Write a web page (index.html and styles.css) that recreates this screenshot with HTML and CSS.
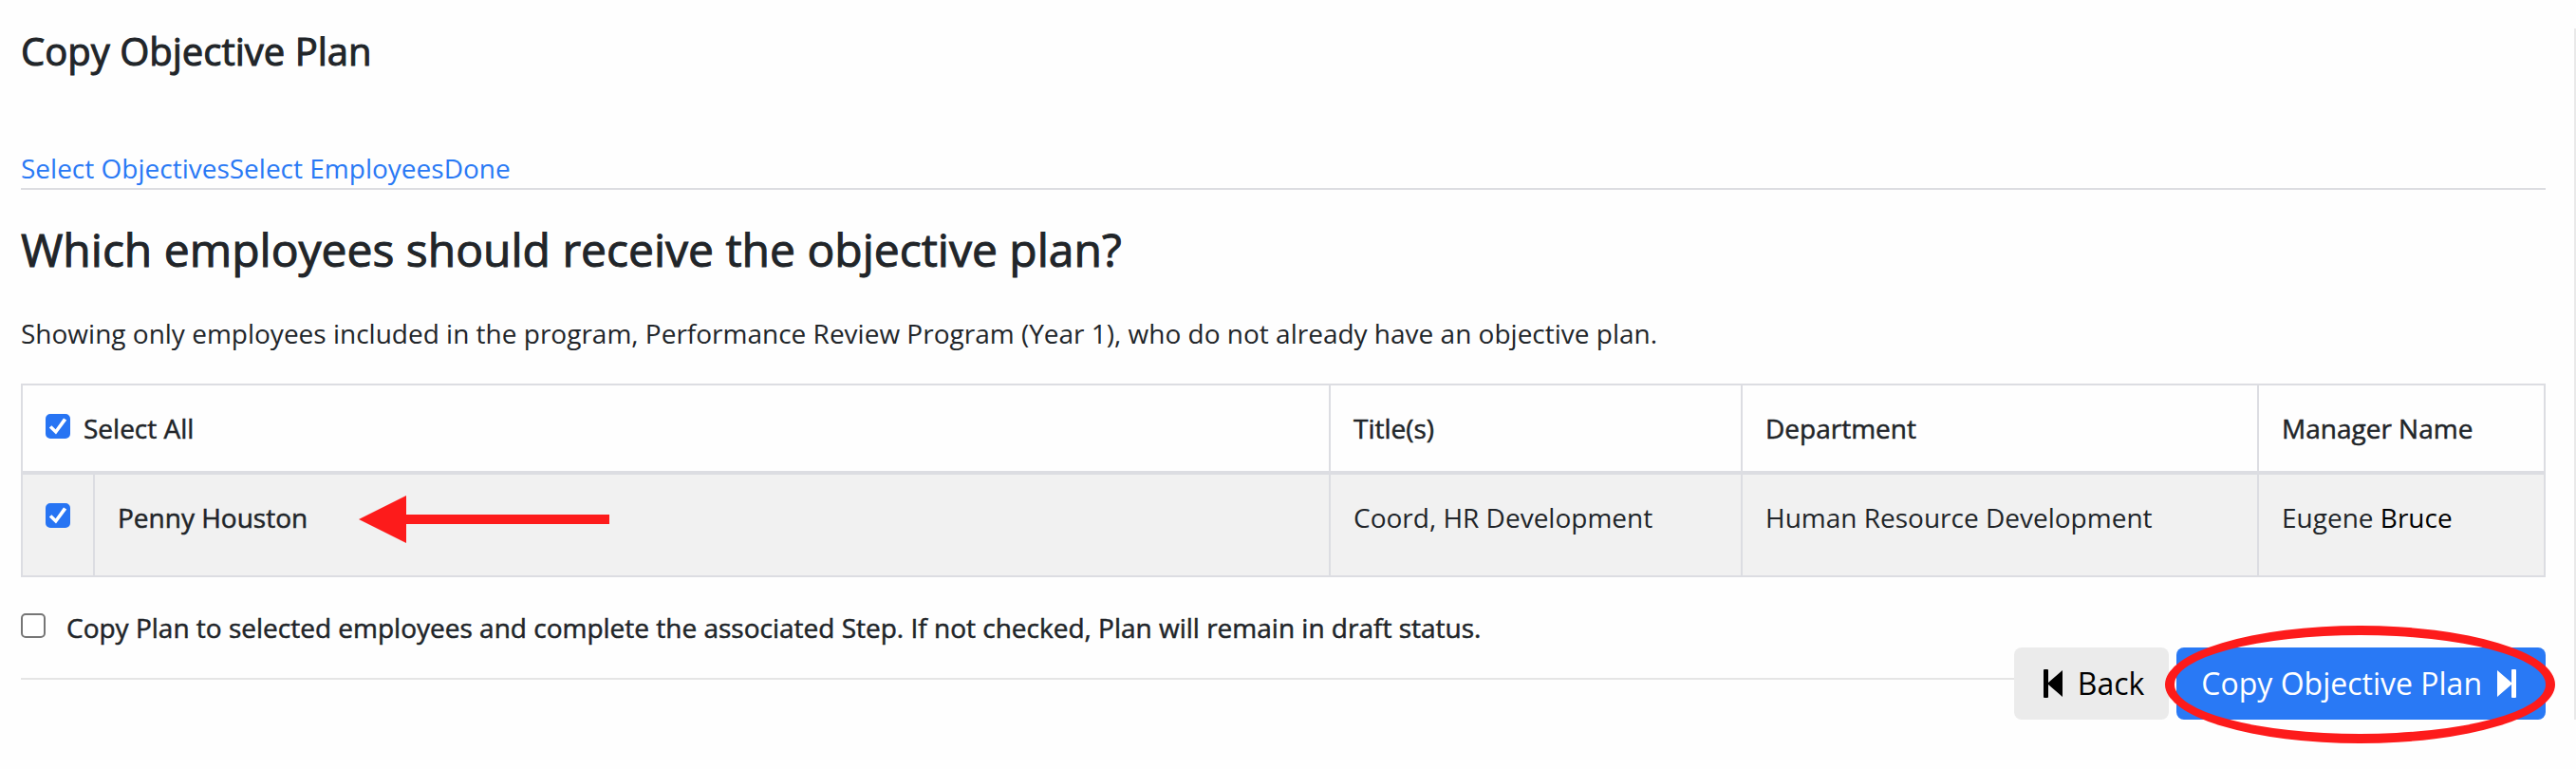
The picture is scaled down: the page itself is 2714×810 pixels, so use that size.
FILE: index.html
```html
<!DOCTYPE html>
<html lang="en">
<head>
<meta charset="utf-8">
<title>Copy Objective Plan</title>
<link rel="stylesheet" href="styles.css">
</head>
<body>
<main class="page">
  <h1 class="page-title">Copy Objective Plan</h1>
  <nav class="steps"><a href="#objectives">Select Objectives</a><a href="#employees">Select Employees</a><a href="#done">Done</a></nav>
  <h2 class="question">Which employees should receive the objective plan?</h2>
  <p class="intro">Showing only employees included in the program, Performance Review Program (Year 1), who do not already have an objective plan.</p>
  <table class="employees">
    <colgroup><col class="col-check"><col class="col-name"><col class="col-title"><col class="col-dept"><col class="col-manager"></colgroup>
    <thead>
      <tr>
        <th colspan="2" scope="col"><label class="check-label"><input class="check" type="checkbox" checked>Select All</label></th>
        <th scope="col">Title(s)</th>
        <th scope="col">Department</th>
        <th scope="col">Manager Name</th>
      </tr>
    </thead>
    <tbody>
      <tr>
        <td><div class="check-label"><input class="check" type="checkbox" id="penny" checked></div></td>
        <td>
          <div class="name-cell">
            <label class="name" for="penny">Penny Houston</label>
            <svg class="arrow" viewBox="0 0 264 50" aria-hidden="true"><path d="M0 25 50 0V20H264V30H50V50Z" fill="#fd1b1b"/></svg>
          </div>
        </td>
        <td>Coord, HR Development</td>
        <td>Human Resource Development</td>
        <td>Eugene <span class="surname">Bruce</span></td>
      </tr>
    </tbody>
  </table>
  <label class="check-label complete"><input class="check" type="checkbox">Copy Plan to selected employees and complete the associated Step. If not checked, Plan will remain in draft status.</label>
  <footer class="actions">
    <hr class="rule">
    <button class="btn btn-back" type="button">
      <svg class="icon" viewBox="0 0 20 30" aria-hidden="true"><path d="M1 0H4Q5 0 5 1V14L20 1V29L5 16V29Q5 30 4 30H1Q0 30 0 29V1Q0 0 1 0Z" fill="currentColor"/></svg>
      Back
    </button>
    <div class="highlight">
      <button class="btn btn-primary" type="button">
        Copy Objective Plan
        <svg class="icon" viewBox="0 0 20 30" aria-hidden="true"><path d="M19 0H16Q15 0 15 1V14L0 1V29L15 16V29Q15 30 16 30H19Q20 30 20 29V1Q20 0 19 0Z" fill="currentColor"/></svg>
      </button>
    </div>
  </footer>
</main>
</body>
</html>
```
FILE: styles.css
```css
* { box-sizing: border-box; }

body {
  margin: 0;
  min-height: 100vh;
  padding: 30px 0 52px;
  background: #fefefe;
  color: #212529;
  font: 400 28px/42px "Open Sans", "Noto Sans", sans-serif;
}

.page {
  padding: 0 30px 0 22px;
  border-right: 2px solid #e9e9e9;
}

.page-title {
  margin: 0 0 78px;
  font-size: 40px;
  line-height: 48px;
  font-weight: 500;
  -webkit-text-stroke: 1px currentColor;
}

.steps {
  display: flex;
  border-bottom: 2px solid #dcdde1;
}

.steps a { color: #2979f5; text-decoration: none; }

.question {
  margin: 34px 0 38px;
  font-size: 48px;
  line-height: 58px;
  font-weight: 500;
  -webkit-text-stroke: 1px currentColor;
}

.intro { margin: 0 0 32px; }

.employees {
  width: 100%;
  table-layout: fixed;
  border-collapse: separate;
  border-spacing: 0;
  border: solid #dcdde2;
  border-width: 2px 0 0 2px;
}

.col-check { width: 76px; }
.col-title { width: 434px; }
.col-dept { width: 544px; }
.col-manager { width: 302px; }

.employees th,
.employees td {
  padding: 24px;
  text-align: left;
  vertical-align: top;
  border: solid #dcdde2;
  border-width: 0 2px 2px 0;
}

.employees th { font-weight: 500; border-bottom-width: 4px; }
.employees td { padding-bottom: 40px; background: #f1f1f1; }

.employees th,
.name,
.complete { -webkit-text-stroke: 0.5px currentColor; }

.check-label {
  display: flex;
  align-items: flex-start;
  gap: 14px;
  font-weight: 500;
}

.check {
  appearance: none;
  position: relative;
  flex: none;
  width: 26px;
  height: 26px;
  margin: 6px 0 0;
  border: 2px solid #767676;
  border-radius: 5px;
  background: #fff;
}

.check:checked { border-color: #2774f3; background: #2774f3; }

.check:checked::after {
  content: "";
  position: absolute;
  inset: 1px;
  background: #fff;
  clip-path: polygon(4% 57%, 17% 46%, 38% 66%, 80% 8%, 96% 18%, 40% 92%);
}

.name-cell { display: flex; align-items: flex-start; height: 42px; gap: 54px; }
.name { font-weight: 500; }
.arrow { flex: none; width: 264px; height: 50px; margin-top: -2px; }
.surname { color: #000; }

.complete { margin-top: 32px; gap: 22px; }

.actions { display: flex; align-items: flex-start; }

.rule {
  flex: 1;
  margin: 32px 0 0;
  border: 0;
  border-top: 2px solid #e5e5e5;
}

.btn {
  display: flex;
  align-items: center;
  gap: 16px;
  height: 76px;
  padding: 0 26px;
  border: 0;
  border-radius: 8px;
  font: inherit;
  font-size: 32px;
  white-space: nowrap;
}

.btn-back { margin-right: 8px; padding-left: 31px; background: #ebebeb; color: #000; }
.btn-primary { padding-right: 31px; background: #2979f5; color: #fff; }
.icon { width: 20px; height: 30px; }

.highlight { position: relative; }

.highlight::after {
  content: "";
  position: absolute;
  inset: -23px -10px -25px -12px;
  border: 10px solid #fd1b1b;
  border-radius: 50%;
  pointer-events: none;
}
```
